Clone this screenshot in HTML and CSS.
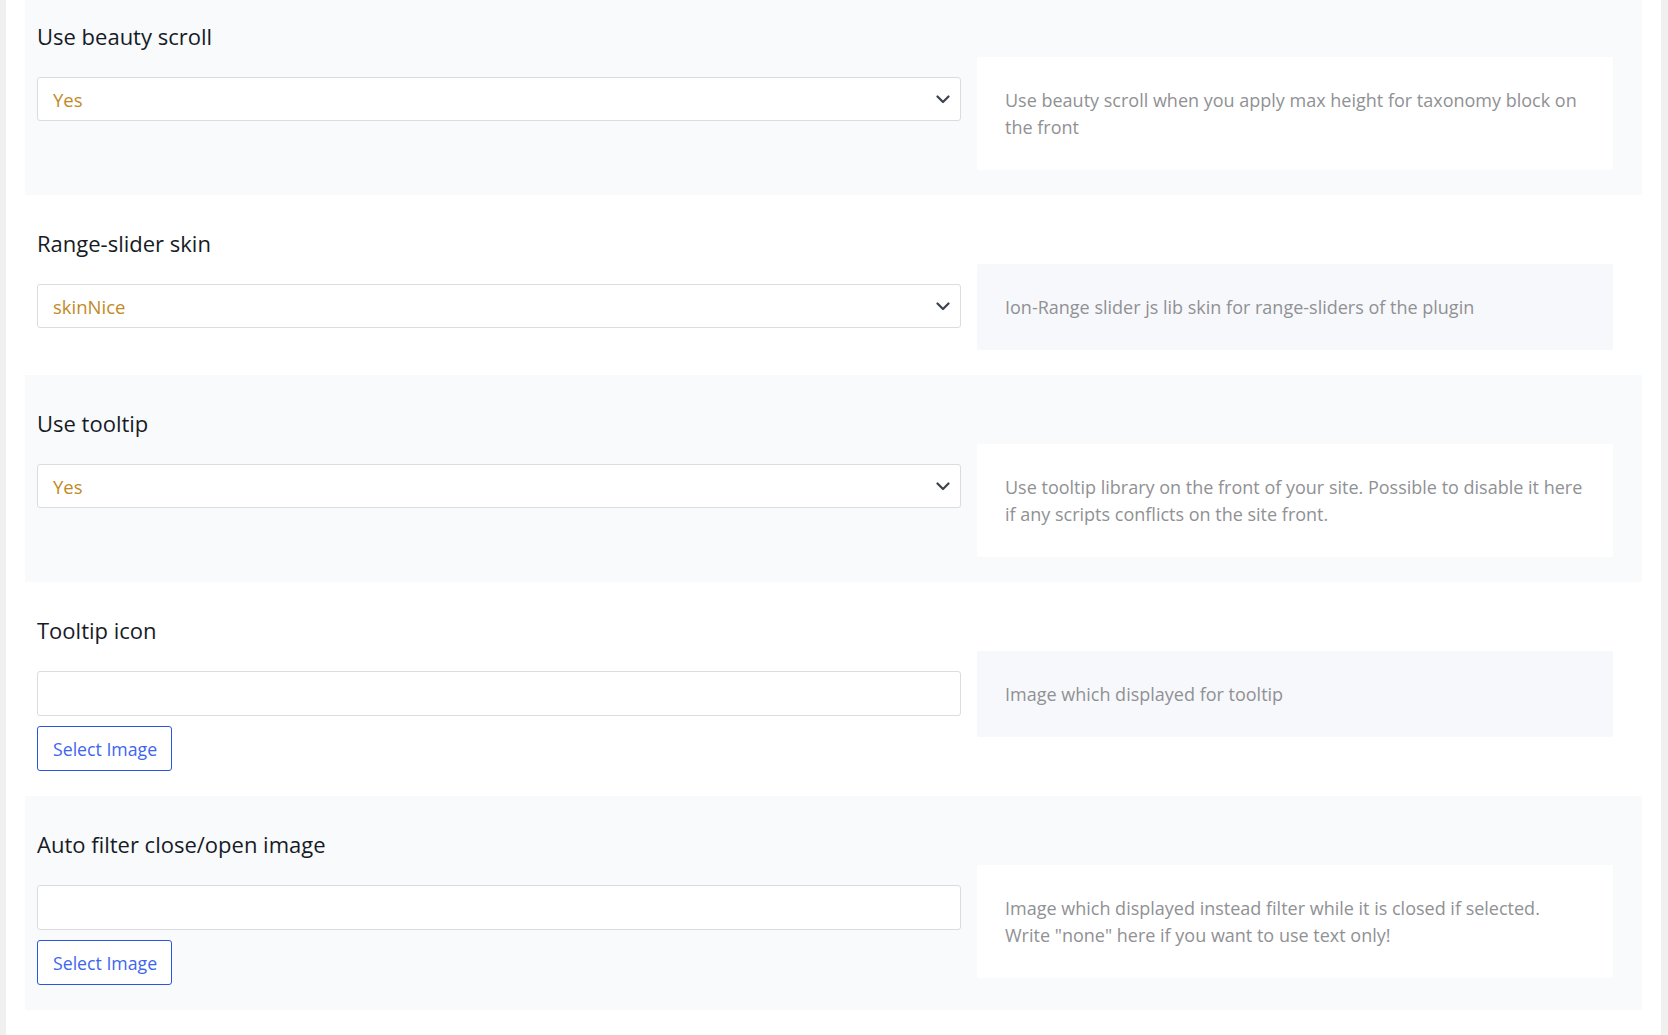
FILE: index.html
```html
<!DOCTYPE html>
<html lang="en">
<head>
    <meta charset="UTF-8">
    <meta name="viewport" content="width=device-width, initial-scale=1.0">
    <title>Filter Settings</title>
    <link rel="stylesheet" href="styles.css">
</head>
<body>
    <div class="page">
        <div class="settings">

            <div class="setting">
                <h3 class="setting-title">Use beauty scroll</h3>
                <div class="setting-row">
                    <div class="setting-field">
                        <div class="select-box">
                            <span class="select-value">Yes</span>
                            <svg class="chevron" width="14" height="9" viewBox="0 0 14 9"><path d="M1.5 1.5 L7 7 L12.5 1.5" /></svg>
                        </div>
                    </div>
                    <div class="setting-desc">Use beauty scroll when you apply max height for taxonomy block on the front</div>
                </div>
            </div>

            <div class="setting">
                <h3 class="setting-title">Range-slider skin</h3>
                <div class="setting-row">
                    <div class="setting-field">
                        <div class="select-box">
                            <span class="select-value">skinNice</span>
                            <svg class="chevron" width="14" height="9" viewBox="0 0 14 9"><path d="M1.5 1.5 L7 7 L12.5 1.5" /></svg>
                        </div>
                    </div>
                    <div class="setting-desc">Ion-Range slider js lib skin for range-sliders of the plugin</div>
                </div>
            </div>

            <div class="setting">
                <h3 class="setting-title">Use tooltip</h3>
                <div class="setting-row">
                    <div class="setting-field">
                        <div class="select-box">
                            <span class="select-value">Yes</span>
                            <svg class="chevron" width="14" height="9" viewBox="0 0 14 9"><path d="M1.5 1.5 L7 7 L12.5 1.5" /></svg>
                        </div>
                    </div>
                    <div class="setting-desc">Use tooltip library on the front of your site. Possible to disable it here if any scripts conflicts on the site front.</div>
                </div>
            </div>

            <div class="setting">
                <h3 class="setting-title">Tooltip icon</h3>
                <div class="setting-row">
                    <div class="setting-field">
                        <input class="text-input" type="text" value="">
                        <button class="btn-select">Select Image</button>
                    </div>
                    <div class="setting-desc">Image which displayed for tooltip</div>
                </div>
            </div>

            <div class="setting">
                <h3 class="setting-title">Auto filter close/open image</h3>
                <div class="setting-row">
                    <div class="setting-field">
                        <input class="text-input" type="text" value="">
                        <button class="btn-select">Select Image</button>
                    </div>
                    <div class="setting-desc">Image which displayed instead filter while it is closed if selected.<br>Write "none" here if you want to use text only!</div>
                </div>
            </div>

        </div>
    </div>
</body>
</html>
```

FILE: styles.css
```css
* {
    margin: 0;
    padding: 0;
    box-sizing: border-box;
}

body {
    font-family: 'Open Sans', 'Noto Sans', sans-serif;
    background-color: #fff;
    color: #1d2327;
}

.page {
    min-height: 100vh;
    border-left: 6px solid #f0f0f1;
    border-right: 7px solid #f0f0f1;
    padding: 0 19px;
}

.setting {
    padding: 32px 29px 25px 12px;
    background-color: #fff;
}

.setting:nth-child(odd) {
    background-color: #f9fafc;
}

.setting:first-child {
    padding-top: 20px;
}

.setting-title {
    font-size: 22px;
    font-weight: 400;
    line-height: 32px;
    margin-bottom: 5px;
    color: #161b26;
}

.setting-row {
    display: flex;
    align-items: flex-start;
    gap: 16px;
}

.setting-field {
    width: 924px;
    flex-shrink: 0;
    padding-top: 20px;
    display: flex;
    flex-direction: column;
    align-items: flex-start;
    gap: 10px;
}

.select-box {
    width: 100%;
    height: 44px;
    display: flex;
    align-items: center;
    justify-content: space-between;
    padding: 0 10px 0 15px;
    background-color: #fff;
    border: 1px solid #dcdcde;
    border-radius: 3px;
}

.select-value {
    font-size: 18.5px;
    color: #c18a1f;
}

.chevron path {
    fill: none;
    stroke: #3c434a;
    stroke-width: 2.2;
    stroke-linecap: round;
    stroke-linejoin: round;
}

.text-input {
    width: 100%;
    height: 45px;
    border: 1px solid #dcdcde;
    border-radius: 3px;
    background-color: #fff;
    font-family: inherit;
    font-size: 17px;
    padding: 0 15px;
}

.btn-select {
    height: 45px;
    padding: 0 14px 0 15px;
    background-color: #fff;
    border: 1px solid #2c55de;
    border-radius: 3px;
    color: #3d66f0;
    font-family: inherit;
    font-size: 17.7px;
    cursor: pointer;
}

.setting-desc {
    flex: 1;
    padding: 29.5px 28px;
    font-size: 18px;
    line-height: 27px;
    color: #909194;
    background-color: #f7f8fb;
    border-radius: 2px;
}

.setting:nth-child(odd) .setting-desc {
    background-color: #fff;
}
```
